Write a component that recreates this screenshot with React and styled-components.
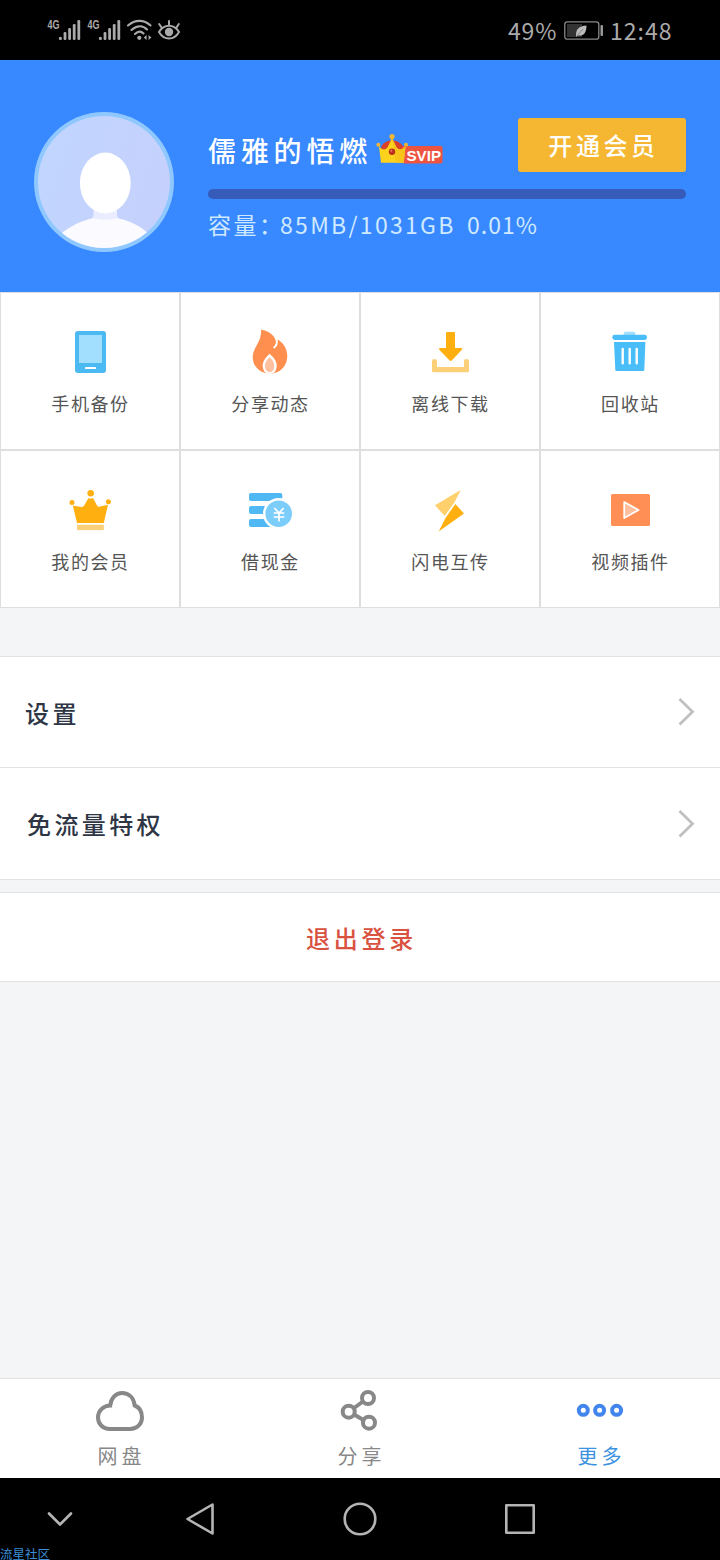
import React from "react";
import styled, { createGlobalStyle } from "styled-components";

const GlobalStyle = createGlobalStyle`
  * {
    box-sizing: border-box;
  }
  body {
    margin: 0;
    background: #f4f5f7;
    font-family: "Noto Sans CJK SC", "Noto Sans", sans-serif;
  }
  svg {
    display: block;
    flex: none;
  }
`;

const Screen = styled.div`
  position: relative;
  display: flex;
  flex-direction: column;
  width: 720px;
  height: 1560px;
  overflow: hidden;
  background: #f4f5f7;
`;

const StatusBar = styled.div`
  display: flex;
  justify-content: space-between;
  height: 60px;
  padding: 19px 46px 0 47px;
  background: #000;
`;

const StatusGroup = styled.div`
  display: flex;
  align-items: center;
  height: 24px;
  gap: ${(props) => props.gap}px;
`;

const StatusText = styled.span`
  width: ${(props) => props.width}px;
  color: #aaa;
  font-size: 23px;
  line-height: 22px;
  padding-bottom: 2px;
  letter-spacing: ${(props) => props.spacing}px;
  white-space: nowrap;
`;

const Header = styled.header`
  display: flex;
  gap: 34px;
  height: 232px;
  padding: 52px 34px 0;
  background: #3888ff;
`;

const Profile = styled.div`
  flex: 1;
  padding-top: 6px;
`;

const NameRow = styled.div`
  display: flex;
  align-items: flex-end;
  height: 54px;
`;

const Name = styled.span`
  width: 168px;
  color: #fff;
  font-size: 28px;
  font-weight: 500;
  line-height: 40px;
  padding-bottom: 2px;
  letter-spacing: 4.8px;
  white-space: nowrap;
`;

const Badge = styled.div`
  height: 39px;
`;

const VipButton = styled.button`
  width: 168px;
  height: 54px;
  margin-left: auto;
  padding: 0 0 2px 3px;
  border: none;
  border-radius: 3px;
  background: #f5b731;
  color: #fff;
  font-family: inherit;
  font-size: 24px;
  font-weight: 500;
  letter-spacing: 3.6px;
`;

const Progress = styled.div`
  height: 10px;
  margin-top: 17px;
  border-radius: 5px;
  background: #375bb8;
`;

const Capacity = styled.div`
  display: flex;
  margin-top: 10px;
  color: #cfeaff;
  font-size: 23px;
  line-height: 30px;
  white-space: nowrap;
`;

const CapacityPart = styled.span`
  width: ${(props) => props.width}px;
  letter-spacing: ${(props) => props.spacing}px;
`;

const Grid = styled.div`
  display: grid;
  grid-template-columns: repeat(4, 180px);
  grid-auto-rows: 158px;
`;

const Cell = styled.div`
  display: flex;
  flex-direction: column;
  align-items: center;
  padding-top: 29px;
  border: 1px solid #dedede;
  background: #fff;
`;

const CellLabel = styled.span`
  margin-top: 9px;
  padding-left: 1px;
  color: #555;
  font-size: 18px;
  line-height: 24px;
  letter-spacing: 1.6px;
`;

const Menu = styled.div`
  margin-top: 48px;
  border-top: 1px solid #e0e2e4;
`;

const MenuRow = styled.div`
  display: flex;
  align-items: center;
  justify-content: space-between;
  height: ${(props) => props.height}px;
  padding: 0 24px 0 ${(props) => props.indent}px;
  border-bottom: 1px solid #e0e2e4;
  background: #fff;
  color: #2e3645;
  font-size: 24px;
  font-weight: 500;
  letter-spacing: 3.4px;
`;

const Logout = styled.button`
  height: 90px;
  margin-top: 12px;
  padding: 0 0 0 3px;
  border: solid #e0e2e4;
  border-width: 1px 0;
  background: #fff;
  color: #d9513f;
  font-family: inherit;
  font-size: 24px;
  font-weight: 500;
  letter-spacing: 3.8px;
`;

const TabBar = styled.nav`
  display: grid;
  grid-template-columns: repeat(3, 1fr);
  height: 100px;
  margin-top: auto;
  border-top: 1px solid #e0e2e4;
  background: #fff;
`;

const Tab = styled.div`
  display: flex;
  flex-direction: column;
  align-items: center;
  padding-top: 10px;
  color: ${(props) => (props.$active ? "#3d92e0" : "#888")};
`;

const TabLabel = styled.span`
  margin-top: 10px;
  padding-left: 3px;
  font-size: 20px;
  line-height: 26px;
  letter-spacing: 4px;
`;

const SystemNav = styled.div`
  display: grid;
  grid-template-columns: 120px 160px 160px 160px;
  justify-items: center;
  height: 82px;
  padding-top: 21px;
  background: #000;
`;

const Watermark = styled.span`
  position: absolute;
  left: 0;
  bottom: 0;
  color: #3a8fd6;
  font-size: 12.5px;
  line-height: 13px;
`;

const Signal = () => (
  <svg width="34" height="24" viewBox="0 0 34 24" fill="#aaa">
    <text x="0.5" y="10" fontFamily="Liberation Sans" fontWeight="bold" fontSize="12" textLength="12" lengthAdjust="spacingAndGlyphs">4G</text>
    <circle cx="13.4" cy="19.4" r="1.6" />
    <rect x="16.6" y="13" width="2.8" height="8" rx="1.2" />
    <rect x="21.2" y="9" width="2.8" height="12" rx="1.2" />
    <rect x="25.8" y="5" width="2.8" height="16" rx="1.2" />
    <rect x="30.4" y="1" width="2.8" height="20" rx="1.2" />
  </svg>
);

const Wifi = () => (
  <svg width="26" height="24" viewBox="0 0 26 24" fill="none" stroke="#aaa" strokeWidth="2.1" strokeLinecap="round">
    <path d="M1 6.5C8 .3 17 .3 23.5 6.5M4.5 11C10 6 16 6 20 10.5M8 15C11 12 14 12 16.5 14.5" />
    <circle cx="12.3" cy="18.8" r="2.1" fill="#aaa" stroke="none" />
    <path d="M19.6 16v5l-2.8-2.5zM21.6 16v5l2.8-2.5z" fill="#aaa" stroke="none" />
  </svg>
);

const EyeBox = styled.div`
  margin-left: -2px;
`;

const Eye = () => (
  <EyeBox>
    <svg width="24" height="24" viewBox="0 0 24 24" fill="none" stroke="#aaa" strokeWidth="2" strokeLinecap="round">
      <path d="M2 13C7 4.5 17 4.5 22 13C17 21.7 7 21.7 2 13Z" />
      <circle cx="12" cy="13" r="4.2" fill="#aaa" stroke="none" />
      <path d="M12 6V2M4.5 8.5L2.2 5M19.5 8.5L21.8 5" />
    </svg>
  </EyeBox>
);

const Battery = () => (
  <svg width="40" height="24" viewBox="0 0 40 24">
    <rect x="0.8" y="2.8" width="34" height="17.4" rx="2.5" fill="none" stroke="#888" strokeWidth="1.3" />
    <rect x="3" y="5" width="15" height="13" fill="#333" />
    <path d="M12 17.5C11.5 10 15 7 22.5 6.5C22.5 14 19.5 17 14.5 16.5Z" fill="#bbb" />
    <path d="M12 18L19 10" stroke="#777" strokeWidth="0.8" />
    <rect x="36.5" y="6" width="2.5" height="11" rx="1" fill="#999" />
  </svg>
);

const Avatar = () => (
  <svg width="140" height="140" viewBox="0 0 140 140">
    <defs>
      <linearGradient id="face" x1="0" y1="0" x2="1" y2="0.3">
        <stop offset="0" stopColor="#c0d6fe" />
        <stop offset="1" stopColor="#c5d1fc" />
      </linearGradient>
      <clipPath id="round">
        <circle cx="70" cy="70" r="66" />
      </clipPath>
    </defs>
    <circle cx="70" cy="70" r="70" fill="#8fc7ff" />
    <g clipPath="url(#round)">
      <rect width="140" height="140" fill="url(#face)" />
      <path d="M59.5 92H83V103C83 106 86 107 91 108L95 122H48L52 108C56 107 59.5 106 59.5 103Z" fill="#e9edff" />
      <path d="M24 124C36 114 48 108 60 106.5Q71 109 83 106.5C94 108 106 113 117 124V140H24Z" fill="#fbfbff" />
      <ellipse cx="71.3" cy="71" rx="25.4" ry="30.4" fill="#fff" />
    </g>
  </svg>
);

const SvipBadge = () => (
  <svg width="68" height="34" viewBox="0 0 68 34">
    <path d="M5 15C7 5 25 5 27.5 15L25 22H8Z" fill="#d8402c" />
    <rect x="26" y="13" width="40.5" height="17.5" rx="2" fill="#ee5540" />
    <path d="M3 13.5Q8 19 11.5 14.5L16 5L20.5 14.5Q24 19 29.5 13.5L27.7 29.7H5Z" fill="#fcd21c" />
    <path d="M16 5L20.5 14.5Q24 19 29.5 13.5L27.7 29.7H20Z" fill="#f7c51a" />
    <g fill="#f2b632">
      <circle cx="16" cy="3.6" r="2.6" />
      <circle cx="2.4" cy="11.8" r="2" />
      <circle cx="30" cy="11.8" r="2" />
    </g>
    <circle cx="16" cy="18.7" r="3.2" fill="#b9301c" />
    <circle cx="15.3" cy="17.8" r="1" fill="#f08060" />
    <text x="30.5" y="27.5" fill="#fff" fontFamily="Liberation Sans" fontWeight="bold" fontSize="15.5" textLength="34.5" lengthAdjust="spacingAndGlyphs">SVIP</text>
  </svg>
);

const icons = {
  phone: (
    <>
      <rect x="15" y="9" width="31" height="42" rx="3" fill="#4bb9f2" />
      <rect x="19" y="13" width="23" height="28" fill="#a2dfff" />
      <rect x="25" y="45" width="11" height="2" rx="0.6" fill="#fff" />
    </>
  ),
  fire: (
    <>
      <path d="M21 7.7C29 8.5 36 14.5 36 20.5C35.8 23.5 33.4 24 33.6 26.2C36.6 24.5 37.4 20.5 37 17C43.5 20.5 47.3 27 47.3 34C47.3 44 40 51.7 30 51.7C20 51.7 12.7 44.5 12.7 35C12.7 25.5 22 20 21 7.7Z" fill="#ff8f4e" />
      <path d="M36.7 16.5C37.4 20.5 36.8 24 33.7 26" fill="none" stroke="#fff" strokeWidth="1.8" />
      <path d="M29.6 31.7C33 34.5 36.7 39 36.7 43.5C36.7 48.5 34 52 29.6 52C25.5 52 22.7 48.5 22.7 43.5C22.7 39 26.3 34.5 29.6 31.7Z" fill="#fff" />
      <path d="M29.6 35.3C32 37.5 34.3 40.5 34.3 43.7C34.3 47.5 32.5 50 29.6 50C26.8 50 25 47.5 25 43.7C25 40.5 27.3 37.5 29.6 35.3Z" fill="#ffc0a0" />
    </>
  ),
  download: (
    <>
      <path d="M27 10H34Q35 10 35 11V26H41Q43 26.3 41.6 28L32 38.3Q30.7 39.5 29.4 38.3L19.5 28Q18.2 26.3 20 26H26V11Q26 10 27 10Z" fill="#ffb010" />
      <path d="M12 39Q12 37 14.3 37Q17 37 17 39V45H44V39Q44 37 46.5 37Q49 37 49 39V49Q49 50.3 47.7 50.3H13.3Q12 50.3 12 49Z" fill="#fbd079" />
    </>
  ),
  trash: (
    <>
      <path d="M23.7 13V11.5Q23.7 9.7 25.5 9.7H33.5Q35.3 9.7 35.3 11.5V13Z" fill="#a2dfff" />
      <rect x="12.3" y="12.8" width="34.7" height="5.2" rx="2.4" fill="#49bdf8" />
      <path d="M14 20H45.4L44.3 48Q44.2 49 43 49H16.5Q15.4 49 15.3 48Z" fill="#49bdf8" />
      <path d="M22.7 27V41.3M29.7 27V41.3M36.7 27V41.3" stroke="#fff" strokeWidth="2.4" strokeLinecap="round" />
    </>
  ),
  crown: (
    <>
      <g fill="#ffb010">
        <circle cx="30.7" cy="13.3" r="3.3" />
        <circle cx="12" cy="22.6" r="2.5" />
        <circle cx="48.4" cy="21.8" r="2.5" />
        <path d="M28.5 18Q30.7 19 33 18L37 25.5Q38.2 27.3 40 26.5L48 24.8L43.8 43H17L12.8 25.5L21.3 26.9Q23 27.3 24.2 25.5Z" />
      </g>
      <rect x="17" y="44.7" width="26.8" height="5.4" fill="#fbd079" />
    </>
  ),
  cash: (
    <>
      <g fill="#50b9f4">
        <rect x="9" y="13" width="33.3" height="8" rx="2" />
        <rect x="9" y="26" width="30" height="8" rx="2" />
        <rect x="9" y="39" width="30" height="8" rx="2" />
      </g>
      <circle cx="38.7" cy="33.7" r="14.5" fill="#7dcdfa" stroke="#fff" strokeWidth="2.4" />
      <path d="M34.3 28L39 33L43.7 28M39 33V41.5M33.7 33H44.3M33.7 37H44.3" fill="none" stroke="#fff" strokeWidth="1.7" />
    </>
  ),
  bolt: (
    <>
      <path d="M40.7 10L15 25.2L24.7 36L34.5 22.3Z" fill="#ffd06c" />
      <path d="M35.4 24L44 33.5L18.7 51.5L25.5 38Z" fill="#ffb010" />
    </>
  ),
  video: (
    <>
      <rect x="11" y="14" width="39" height="32" rx="1.5" fill="#ff8f54" />
      <path d="M24.2 22L38.6 30L24.2 38Z" fill="#ffbf9e" stroke="#fff" strokeWidth="1.7" strokeLinejoin="round" />
    </>
  ),
};

const cells = [
  { icon: "phone", label: "手机备份" },
  { icon: "fire", label: "分享动态" },
  { icon: "download", label: "离线下载" },
  { icon: "trash", label: "回收站" },
  { icon: "crown", label: "我的会员" },
  { icon: "cash", label: "借现金" },
  { icon: "bolt", label: "闪电互传" },
  { icon: "video", label: "视频插件" },
];

const tabs = [
  {
    label: "网盘",
    icon: (
      <path d="M20 40C12.5 40 8 34.5 8 28.5C8 22 13 16.8 20.2 16.5C21 9 26 4 32 4C39 4 43.8 9 44.7 16.5C49 18 52 22.5 52 28.5C52 35 47 40 40 40Z" />
    ),
  },
  {
    label: "分享",
    icon: (
      <>
        <circle cx="18.7" cy="22.7" r="6" />
        <circle cx="38" cy="9" r="6" />
        <circle cx="39" cy="33.7" r="6" />
        <path d="M24 19L33 12.5M24 25.5L33.5 31" />
      </>
    ),
  },
  {
    label: "更多",
    active: true,
    icon: (
      <g stroke="#4285ec">
        <circle cx="13.3" cy="21.3" r="4.5" />
        <circle cx="29.6" cy="21.3" r="4.5" />
        <circle cx="46.6" cy="21.3" r="4.5" />
      </g>
    ),
  },
];

const Chevron = () => (
  <svg width="20" height="32" viewBox="0 0 20 32" fill="none" stroke="#c0c0c0" strokeWidth="2.8">
    <path d="M3.5 3L16.5 15.8L3.5 28.6" />
  </svg>
);

const NavIcon = ({ children }) => (
  <svg width="40" height="40" viewBox="0 0 40 40" fill="none" stroke="#b4b4b4" strokeWidth="2.6" strokeLinejoin="round" strokeLinecap="round">
    {children}
  </svg>
);

export default function App() {
  return (
    <Screen>
      <GlobalStyle />
      <StatusBar>
        <StatusGroup gap={6}>
          <Signal />
          <Signal />
          <Wifi />
          <Eye />
        </StatusGroup>
        <StatusGroup gap={6}>
          <StatusText width={50} spacing={0.8}>49%</StatusText>
          <Battery />
          <StatusText width={64} spacing={1}>12:48</StatusText>
        </StatusGroup>
      </StatusBar>

      <Header>
        <Avatar />
        <Profile>
          <NameRow>
            <Name>儒雅的悟燃</Name>
            <Badge>
              <SvipBadge />
            </Badge>
            <VipButton>开通会员</VipButton>
          </NameRow>
          <Progress />
          <Capacity>
            <CapacityPart width={72} spacing={2.5}>容量：</CapacityPart>
            <CapacityPart width={187} spacing={2.3}>85MB/1031GB</CapacityPart>
            <CapacityPart width={72} spacing={1}>0.01%</CapacityPart>
          </Capacity>
        </Profile>
      </Header>

      <Grid>
        {cells.map((cell) => (
          <Cell key={cell.icon}>
            <svg width="60" height="60" viewBox="0 0 60 60">
              {icons[cell.icon]}
            </svg>
            <CellLabel>{cell.label}</CellLabel>
          </Cell>
        ))}
      </Grid>

      <Menu>
        <MenuRow height={111} indent={25}>
          设置
          <Chevron />
        </MenuRow>
        <MenuRow height={112} indent={27}>
          免流量特权
          <Chevron />
        </MenuRow>
      </Menu>
      <Logout>退出登录</Logout>

      <TabBar>
        {tabs.map((tab) => (
          <Tab key={tab.label} $active={tab.active}>
            <svg width="60" height="44" viewBox="0 0 60 44" fill="none" stroke="#888" strokeWidth="4">
              {tab.icon}
            </svg>
            <TabLabel>{tab.label}</TabLabel>
          </Tab>
        ))}
      </TabBar>

      <SystemNav>
        <NavIcon>
          <path d="M9 14.5L20 25.5L31 14.5" />
        </NavIcon>
        <NavIcon>
          <path d="M7.5 20L32.5 5.5V34.5Z" />
        </NavIcon>
        <NavIcon>
          <circle cx="20" cy="20" r="15.3" />
        </NavIcon>
        <NavIcon>
          <rect x="6.3" y="6.3" width="27.4" height="27.4" />
        </NavIcon>
      </SystemNav>
      <Watermark>流星社区</Watermark>
    </Screen>
  );
}
